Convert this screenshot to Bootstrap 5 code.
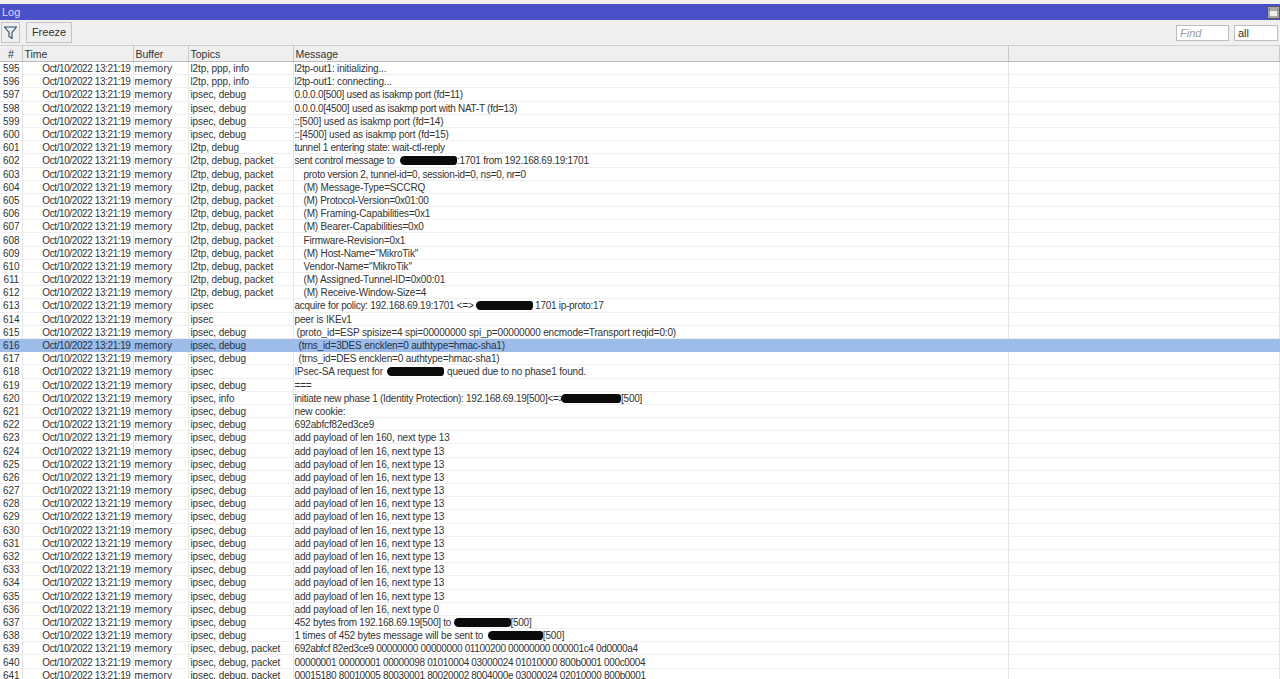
<!DOCTYPE html>
<html lang="en">
<head>
<meta charset="utf-8">
<title>Log</title>
<link href="https://cdn.jsdelivr.net/npm/bootstrap@5.3.0/dist/css/bootstrap.min.css" rel="stylesheet">
<style>
html,body{height:100%;overflow:hidden;background:#fff;}
body{font-family:"Liberation Sans",Arial,sans-serif;font-size:10px;color:#333;}
.win-top{height:4px;background:#f0f0f0;}
.win-title{height:16px;background:#4a50c8;color:#d9dbf4;font-size:11px;line-height:16px;padding-left:2px;}
.win-max{width:13px;height:13px;background:#e4e4e4;border:1px solid #555;}
.win-tools{height:25px;background:#f0f0f0;padding:2px 2px 2px 1px;}
.tool-btn{height:21px;background:#efefef;border:1px solid #c4c4c4;border-radius:0;padding:0;font-size:11px;color:#333;line-height:19px;}
.tool-filter{width:19px;}
.tool-freeze{width:46px;margin-left:6px;}
.tool-input{height:16px;background:#fff;border:1px solid #bdbdbd;font-size:11px;padding:0 3px;line-height:14px;}
.tool-find{width:53px;color:#999;font-style:italic;}
.tool-all{width:44px;margin-left:5px;color:#333;}
.log-grid{table-layout:fixed;width:1280px;border-collapse:collapse;margin:0;}
.log-grid th{height:16px;background:#efefef;font-weight:400;color:#333;padding:0 2px;font-size:10.5px;line-height:14px;border-top:1px solid #d0d0d0;border-bottom:1px solid #bcbcbc;border-right:1px solid #c9c9c9;}
.log-grid td{height:13.2px;padding:1px 1px 0;line-height:11px;white-space:nowrap;overflow:visible;border-bottom:1px solid #efefef;border-right:1px solid #e6e6e6;background:transparent;color:#333;}
.log-grid tr.sel td{background:#9dbce8;color:#26324a;border-color:#9dbce8;}
.c-n{width:22px;text-align:center;letter-spacing:-.1px;padding-left:2px !important;}
.c-t{width:111px;text-align:right;padding-right:2px !important;letter-spacing:-.4px;}
th.c-t{text-align:left;letter-spacing:0;}
.c-b{width:55px;letter-spacing:.3px;}
th.c-b{letter-spacing:0;}
.c-p{width:105px;letter-spacing:-.1px;padding-left:2px !important;}
th.c-p{letter-spacing:0;}
.c-m{width:715px;letter-spacing:-.17px;}
th.c-m{letter-spacing:0;}
.log-grid td.tight{letter-spacing:-.27px;}
.log-grid td.hex{letter-spacing:-.34px;}
.ind1{padding-left:10px !important;}
.ind2{padding-left:3px !important;}
.ind3{padding-left:5px !important;}
.blot{display:inline-block;width:57px;height:9px;background:#0b0b0b;border-radius:5px 3px 4px 5px;vertical-align:-1px;}
.blot-a{margin-left:3px;}
.blot-b{margin-right:2px;}
.blot-c{margin-left:2px;}
.blot-d{width:60px;margin-left:-3px;}
.blot-e{width:55px;margin-left:2px;}
</style>
</head>
<body>
<div class="win-top"></div>
<div class="win-title d-flex justify-content-between align-items-center"><span>Log</span><span class="win-max d-flex"><svg width="11" height="11" viewBox="0 0 11 11"><rect x="1" y="1" width="9" height="9" fill="#efefef" stroke="#666"/><path d="M1 3h9" stroke="#666"/></svg></span></div>
<div class="win-tools d-flex align-items-center">
<button class="tool-btn tool-filter d-flex align-items-center justify-content-center" aria-label="Filter"><svg width="13" height="13" viewBox="0 0 13 13"><path d="M.5 1h12L8 6.5V12.5L5 10.5V6.5z" fill="#e6eef3" stroke="#2f4a5c" stroke-width="1.1"/></svg></button>
<button class="tool-btn tool-freeze">Freeze</button>
<div class="ms-auto d-flex"><div class="tool-input tool-find">Find</div><div class="tool-input tool-all">all</div></div>
</div>
<table class="log-grid">
<thead><tr><th class="c-n">#</th><th class="c-t">Time</th><th class="c-b">Buffer</th><th class="c-p">Topics</th><th class="c-m">Message</th><th></th></tr></thead>
<tbody>
<tr><td class="c-n">595</td><td class="c-t">Oct/10/2022 13:21:19</td><td class="c-b">memory</td><td class="c-p">l2tp, ppp, info</td><td class="c-m">l2tp-out1: initializing...</td><td></td></tr>
<tr><td class="c-n">596</td><td class="c-t">Oct/10/2022 13:21:19</td><td class="c-b">memory</td><td class="c-p">l2tp, ppp, info</td><td class="c-m">l2tp-out1: connecting...</td><td></td></tr>
<tr><td class="c-n">597</td><td class="c-t">Oct/10/2022 13:21:19</td><td class="c-b">memory</td><td class="c-p">ipsec, debug</td><td class="c-m tight">0.0.0.0[500] used as isakmp port (fd=11)</td><td></td></tr>
<tr><td class="c-n">598</td><td class="c-t">Oct/10/2022 13:21:19</td><td class="c-b">memory</td><td class="c-p">ipsec, debug</td><td class="c-m tight">0.0.0.0[4500] used as isakmp port with NAT-T (fd=13)</td><td></td></tr>
<tr><td class="c-n">599</td><td class="c-t">Oct/10/2022 13:21:19</td><td class="c-b">memory</td><td class="c-p">ipsec, debug</td><td class="c-m">::[500] used as isakmp port (fd=14)</td><td></td></tr>
<tr><td class="c-n">600</td><td class="c-t">Oct/10/2022 13:21:19</td><td class="c-b">memory</td><td class="c-p">ipsec, debug</td><td class="c-m">::[4500] used as isakmp port (fd=15)</td><td></td></tr>
<tr><td class="c-n">601</td><td class="c-t">Oct/10/2022 13:21:19</td><td class="c-b">memory</td><td class="c-p">l2tp, debug</td><td class="c-m tight">tunnel 1 entering state: wait-ctl-reply</td><td></td></tr>
<tr><td class="c-n">602</td><td class="c-t">Oct/10/2022 13:21:19</td><td class="c-b">memory</td><td class="c-p">l2tp, debug, packet</td><td class="c-m tight">sent control message to <span class="blot blot-a"></span>:1701 from 192.168.69.19:1701</td><td></td></tr>
<tr><td class="c-n">603</td><td class="c-t">Oct/10/2022 13:21:19</td><td class="c-b">memory</td><td class="c-p">l2tp, debug, packet</td><td class="c-m ind1 tight">proto version 2, tunnel-id=0, session-id=0, ns=0, nr=0</td><td></td></tr>
<tr><td class="c-n">604</td><td class="c-t">Oct/10/2022 13:21:19</td><td class="c-b">memory</td><td class="c-p">l2tp, debug, packet</td><td class="c-m ind1">(M) Message-Type=SCCRQ</td><td></td></tr>
<tr><td class="c-n">605</td><td class="c-t">Oct/10/2022 13:21:19</td><td class="c-b">memory</td><td class="c-p">l2tp, debug, packet</td><td class="c-m ind1 tight">(M) Protocol-Version=0x01:00</td><td></td></tr>
<tr><td class="c-n">606</td><td class="c-t">Oct/10/2022 13:21:19</td><td class="c-b">memory</td><td class="c-p">l2tp, debug, packet</td><td class="c-m ind1">(M) Framing-Capabilities=0x1</td><td></td></tr>
<tr><td class="c-n">607</td><td class="c-t">Oct/10/2022 13:21:19</td><td class="c-b">memory</td><td class="c-p">l2tp, debug, packet</td><td class="c-m ind1">(M) Bearer-Capabilities=0x0</td><td></td></tr>
<tr><td class="c-n">608</td><td class="c-t">Oct/10/2022 13:21:19</td><td class="c-b">memory</td><td class="c-p">l2tp, debug, packet</td><td class="c-m ind1">Firmware-Revision=0x1</td><td></td></tr>
<tr><td class="c-n">609</td><td class="c-t">Oct/10/2022 13:21:19</td><td class="c-b">memory</td><td class="c-p">l2tp, debug, packet</td><td class="c-m ind1">(M) Host-Name="MikroTik"</td><td></td></tr>
<tr><td class="c-n">610</td><td class="c-t">Oct/10/2022 13:21:19</td><td class="c-b">memory</td><td class="c-p">l2tp, debug, packet</td><td class="c-m ind1">Vendor-Name="MikroTik"</td><td></td></tr>
<tr><td class="c-n">611</td><td class="c-t">Oct/10/2022 13:21:19</td><td class="c-b">memory</td><td class="c-p">l2tp, debug, packet</td><td class="c-m ind1">(M) Assigned-Tunnel-ID=0x00:01</td><td></td></tr>
<tr><td class="c-n">612</td><td class="c-t">Oct/10/2022 13:21:19</td><td class="c-b">memory</td><td class="c-p">l2tp, debug, packet</td><td class="c-m ind1">(M) Receive-Window-Size=4</td><td></td></tr>
<tr><td class="c-n">613</td><td class="c-t">Oct/10/2022 13:21:19</td><td class="c-b">memory</td><td class="c-p">ipsec</td><td class="c-m tight">acquire for policy: 192.168.69.19:1701 &lt;=&gt; <span class="blot blot-b"></span>1701 ip-proto:17</td><td></td></tr>
<tr><td class="c-n">614</td><td class="c-t">Oct/10/2022 13:21:19</td><td class="c-b">memory</td><td class="c-p">ipsec</td><td class="c-m">peer is IKEv1</td><td></td></tr>
<tr><td class="c-n">615</td><td class="c-t">Oct/10/2022 13:21:19</td><td class="c-b">memory</td><td class="c-p">ipsec, debug</td><td class="c-m ind2">(proto_id=ESP spisize=4 spi=00000000 spi_p=00000000 encmode=Transport reqid=0:0)</td><td></td></tr>
<tr class="sel"><td class="c-n">616</td><td class="c-t">Oct/10/2022 13:21:19</td><td class="c-b">memory</td><td class="c-p">ipsec, debug</td><td class="c-m ind3">(trns_id=3DES encklen=0 authtype=hmac-sha1)</td><td></td></tr>
<tr><td class="c-n">617</td><td class="c-t">Oct/10/2022 13:21:19</td><td class="c-b">memory</td><td class="c-p">ipsec, debug</td><td class="c-m ind3">(trns_id=DES encklen=0 authtype=hmac-sha1)</td><td></td></tr>
<tr><td class="c-n">618</td><td class="c-t">Oct/10/2022 13:21:19</td><td class="c-b">memory</td><td class="c-p">ipsec</td><td class="c-m">IPsec-SA request for <span class="blot blot-c"></span> queued due to no phase1 found.</td><td></td></tr>
<tr><td class="c-n">619</td><td class="c-t">Oct/10/2022 13:21:19</td><td class="c-b">memory</td><td class="c-p">ipsec, debug</td><td class="c-m">===</td><td></td></tr>
<tr><td class="c-n">620</td><td class="c-t">Oct/10/2022 13:21:19</td><td class="c-b">memory</td><td class="c-p">ipsec, info</td><td class="c-m tight">initiate new phase 1 (Identity Protection): 192.168.69.19[500]&lt;=&gt;<span class="blot blot-d"></span>[500]</td><td></td></tr>
<tr><td class="c-n">621</td><td class="c-t">Oct/10/2022 13:21:19</td><td class="c-b">memory</td><td class="c-p">ipsec, debug</td><td class="c-m">new cookie:</td><td></td></tr>
<tr><td class="c-n">622</td><td class="c-t">Oct/10/2022 13:21:19</td><td class="c-b">memory</td><td class="c-p">ipsec, debug</td><td class="c-m">692abfcf82ed3ce9</td><td></td></tr>
<tr><td class="c-n">623</td><td class="c-t">Oct/10/2022 13:21:19</td><td class="c-b">memory</td><td class="c-p">ipsec, debug</td><td class="c-m">add payload of len 160, next type 13</td><td></td></tr>
<tr><td class="c-n">624</td><td class="c-t">Oct/10/2022 13:21:19</td><td class="c-b">memory</td><td class="c-p">ipsec, debug</td><td class="c-m">add payload of len 16, next type 13</td><td></td></tr>
<tr><td class="c-n">625</td><td class="c-t">Oct/10/2022 13:21:19</td><td class="c-b">memory</td><td class="c-p">ipsec, debug</td><td class="c-m">add payload of len 16, next type 13</td><td></td></tr>
<tr><td class="c-n">626</td><td class="c-t">Oct/10/2022 13:21:19</td><td class="c-b">memory</td><td class="c-p">ipsec, debug</td><td class="c-m">add payload of len 16, next type 13</td><td></td></tr>
<tr><td class="c-n">627</td><td class="c-t">Oct/10/2022 13:21:19</td><td class="c-b">memory</td><td class="c-p">ipsec, debug</td><td class="c-m">add payload of len 16, next type 13</td><td></td></tr>
<tr><td class="c-n">628</td><td class="c-t">Oct/10/2022 13:21:19</td><td class="c-b">memory</td><td class="c-p">ipsec, debug</td><td class="c-m">add payload of len 16, next type 13</td><td></td></tr>
<tr><td class="c-n">629</td><td class="c-t">Oct/10/2022 13:21:19</td><td class="c-b">memory</td><td class="c-p">ipsec, debug</td><td class="c-m">add payload of len 16, next type 13</td><td></td></tr>
<tr><td class="c-n">630</td><td class="c-t">Oct/10/2022 13:21:19</td><td class="c-b">memory</td><td class="c-p">ipsec, debug</td><td class="c-m">add payload of len 16, next type 13</td><td></td></tr>
<tr><td class="c-n">631</td><td class="c-t">Oct/10/2022 13:21:19</td><td class="c-b">memory</td><td class="c-p">ipsec, debug</td><td class="c-m">add payload of len 16, next type 13</td><td></td></tr>
<tr><td class="c-n">632</td><td class="c-t">Oct/10/2022 13:21:19</td><td class="c-b">memory</td><td class="c-p">ipsec, debug</td><td class="c-m">add payload of len 16, next type 13</td><td></td></tr>
<tr><td class="c-n">633</td><td class="c-t">Oct/10/2022 13:21:19</td><td class="c-b">memory</td><td class="c-p">ipsec, debug</td><td class="c-m">add payload of len 16, next type 13</td><td></td></tr>
<tr><td class="c-n">634</td><td class="c-t">Oct/10/2022 13:21:19</td><td class="c-b">memory</td><td class="c-p">ipsec, debug</td><td class="c-m">add payload of len 16, next type 13</td><td></td></tr>
<tr><td class="c-n">635</td><td class="c-t">Oct/10/2022 13:21:19</td><td class="c-b">memory</td><td class="c-p">ipsec, debug</td><td class="c-m">add payload of len 16, next type 13</td><td></td></tr>
<tr><td class="c-n">636</td><td class="c-t">Oct/10/2022 13:21:19</td><td class="c-b">memory</td><td class="c-p">ipsec, debug</td><td class="c-m">add payload of len 16, next type 0</td><td></td></tr>
<tr><td class="c-n">637</td><td class="c-t">Oct/10/2022 13:21:19</td><td class="c-b">memory</td><td class="c-p">ipsec, debug</td><td class="c-m tight">452 bytes from 192.168.69.19[500] to <span class="blot"></span>[500]</td><td></td></tr>
<tr><td class="c-n">638</td><td class="c-t">Oct/10/2022 13:21:19</td><td class="c-b">memory</td><td class="c-p">ipsec, debug</td><td class="c-m">1 times of 452 bytes message will be sent to <span class="blot blot-e"></span>[500]</td><td></td></tr>
<tr><td class="c-n">639</td><td class="c-t">Oct/10/2022 13:21:19</td><td class="c-b">memory</td><td class="c-p">ipsec, debug, packet</td><td class="c-m hex">692abfcf 82ed3ce9 00000000 00000000 01100200 00000000 000001c4 0d0000a4</td><td></td></tr>
<tr><td class="c-n">640</td><td class="c-t">Oct/10/2022 13:21:19</td><td class="c-b">memory</td><td class="c-p">ipsec, debug, packet</td><td class="c-m hex">00000001 00000001 00000098 01010004 03000024 01010000 800b0001 000c0004</td><td></td></tr>
<tr><td class="c-n">641</td><td class="c-t">Oct/10/2022 13:21:19</td><td class="c-b">memory</td><td class="c-p">ipsec, debug, packet</td><td class="c-m hex">00015180 80010005 80030001 80020002 8004000e 03000024 02010000 800b0001</td><td></td></tr>
</tbody>
</table>
<script src="https://cdn.jsdelivr.net/npm/bootstrap@5.3.0/dist/js/bootstrap.bundle.min.js"></script>
</body>
</html>
